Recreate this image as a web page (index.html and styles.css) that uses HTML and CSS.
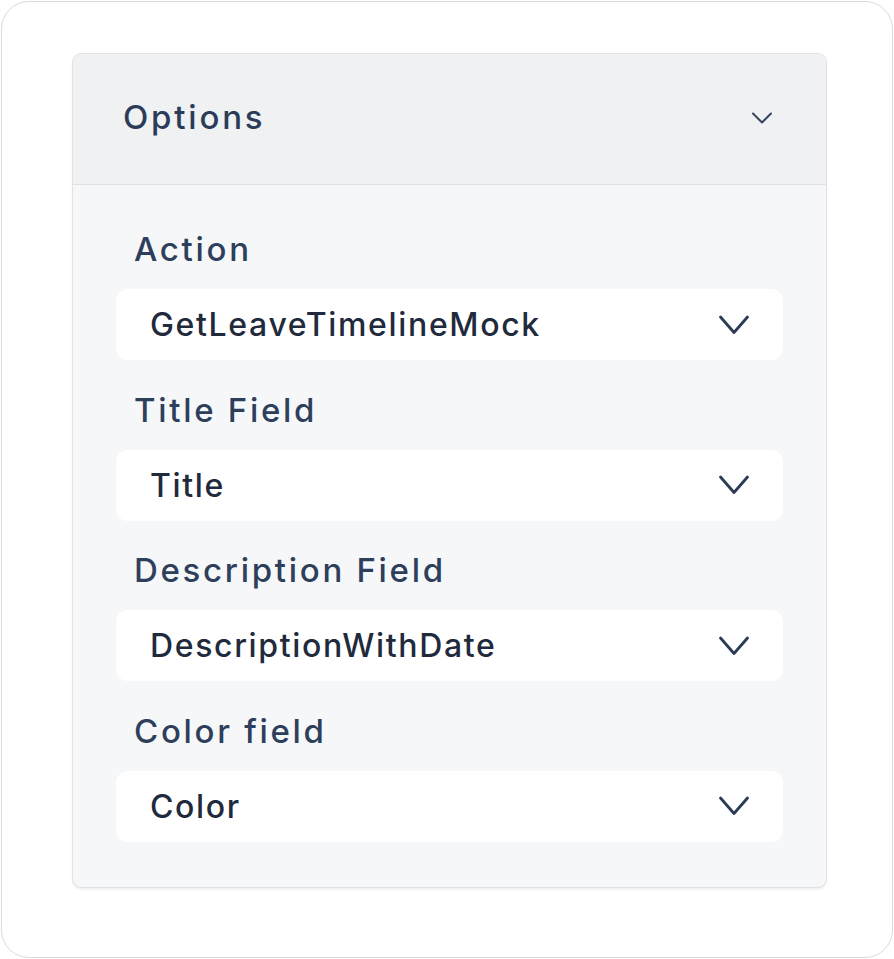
FILE: index.html
```html
<!DOCTYPE html>
<html>
<head>
<meta charset="utf-8">
<link rel="stylesheet" href="styles.css">
</head>
<body>
<div class="frame">
  <div class="card">
    <div class="card-header">
      <span class="card-title">Options</span>
      <svg class="head-chev" width="22" height="16" viewBox="0 0 22 16"><path d="M2 3.5 L11 12.5 L20 3.5" fill="none" stroke="#34445f" stroke-width="2" stroke-linecap="round" stroke-linejoin="round"/></svg>
    </div>
    <div class="card-body">
      <div class="field">
        <div class="label">Action</div>
        <div class="select"><span>GetLeaveTimelineMock</span><svg class="chev" width="32" height="22" viewBox="0 0 32 22"><path d="M2.5 3 L16 18.5 L29.5 3" fill="none" stroke="#2c3a55" stroke-width="2.8" stroke-linecap="round" stroke-linejoin="round"/></svg></div>
      </div>
      <div class="field">
        <div class="label">Title Field</div>
        <div class="select"><span>Title</span><svg class="chev" width="32" height="22" viewBox="0 0 32 22"><path d="M2.5 3 L16 18.5 L29.5 3" fill="none" stroke="#2c3a55" stroke-width="2.8" stroke-linecap="round" stroke-linejoin="round"/></svg></div>
      </div>
      <div class="field">
        <div class="label">Description Field</div>
        <div class="select"><span>DescriptionWithDate</span><svg class="chev" width="32" height="22" viewBox="0 0 32 22"><path d="M2.5 3 L16 18.5 L29.5 3" fill="none" stroke="#2c3a55" stroke-width="2.8" stroke-linecap="round" stroke-linejoin="round"/></svg></div>
      </div>
      <div class="field">
        <div class="label">Color field</div>
        <div class="select"><span>Color</span><svg class="chev" width="32" height="22" viewBox="0 0 32 22"><path d="M2.5 3 L16 18.5 L29.5 3" fill="none" stroke="#2c3a55" stroke-width="2.8" stroke-linecap="round" stroke-linejoin="round"/></svg></div>
      </div>
    </div>
  </div>
</div>
</body>
</html>
```

FILE: styles.css
```css
html, body {
  margin: 0;
  padding: 0;
  background: #ffffff;
}
body {
  font-family: Inter, "Noto Sans", "Liberation Sans", sans-serif;
  padding: 1px;
}
.frame {
  box-sizing: border-box;
  width: 892px;
  height: 957px;
  border: 1.5px solid #d9dadf;
  border-radius: 28px;
  background: #ffffff;
  padding: 51px 0 0 70px;
}
.card {
  box-sizing: border-box;
  width: 755px;
  border: 1.5px solid #e0e2e6;
  border-radius: 9px;
  background: #f6f7f9;
  box-shadow: 0 2px 2px rgba(0, 0, 0, 0.05);
  overflow: hidden;
}
.card-header {
  height: 131px;
  background: #f0f1f3;
  border-bottom: 1.5px solid #dfe1e5;
  display: flex;
  align-items: center;
  justify-content: space-between;
  padding: 0 53px 5px 50px;
  box-sizing: border-box;
}
.card-title {
  font-size: 33px;
  font-weight: 500;
  letter-spacing: 2.8px;
  color: #2b3c58;
}
.head-chev {
  display: block;
  margin-top: 2px;
}
.card-body {
  padding: 42px 43px 45px 43px;
  display: flex;
  flex-direction: column;
  gap: 27.5px;
}
.label {
  font-size: 33px;
  font-weight: 500;
  letter-spacing: 2.7px;
  color: #2e3f5b;
  padding-left: 18px;
  line-height: 44px;
  margin-bottom: 18px;
}
.select {
  height: 71px;
  background: #ffffff;
  border-radius: 12px;
  display: flex;
  align-items: center;
  justify-content: space-between;
  padding: 0 33px 0 34px;
  font-size: 32px;
  font-weight: 530;
  letter-spacing: 1.65px;
  color: #1f2a3c;
}
.chev {
  display: block;
}
```
